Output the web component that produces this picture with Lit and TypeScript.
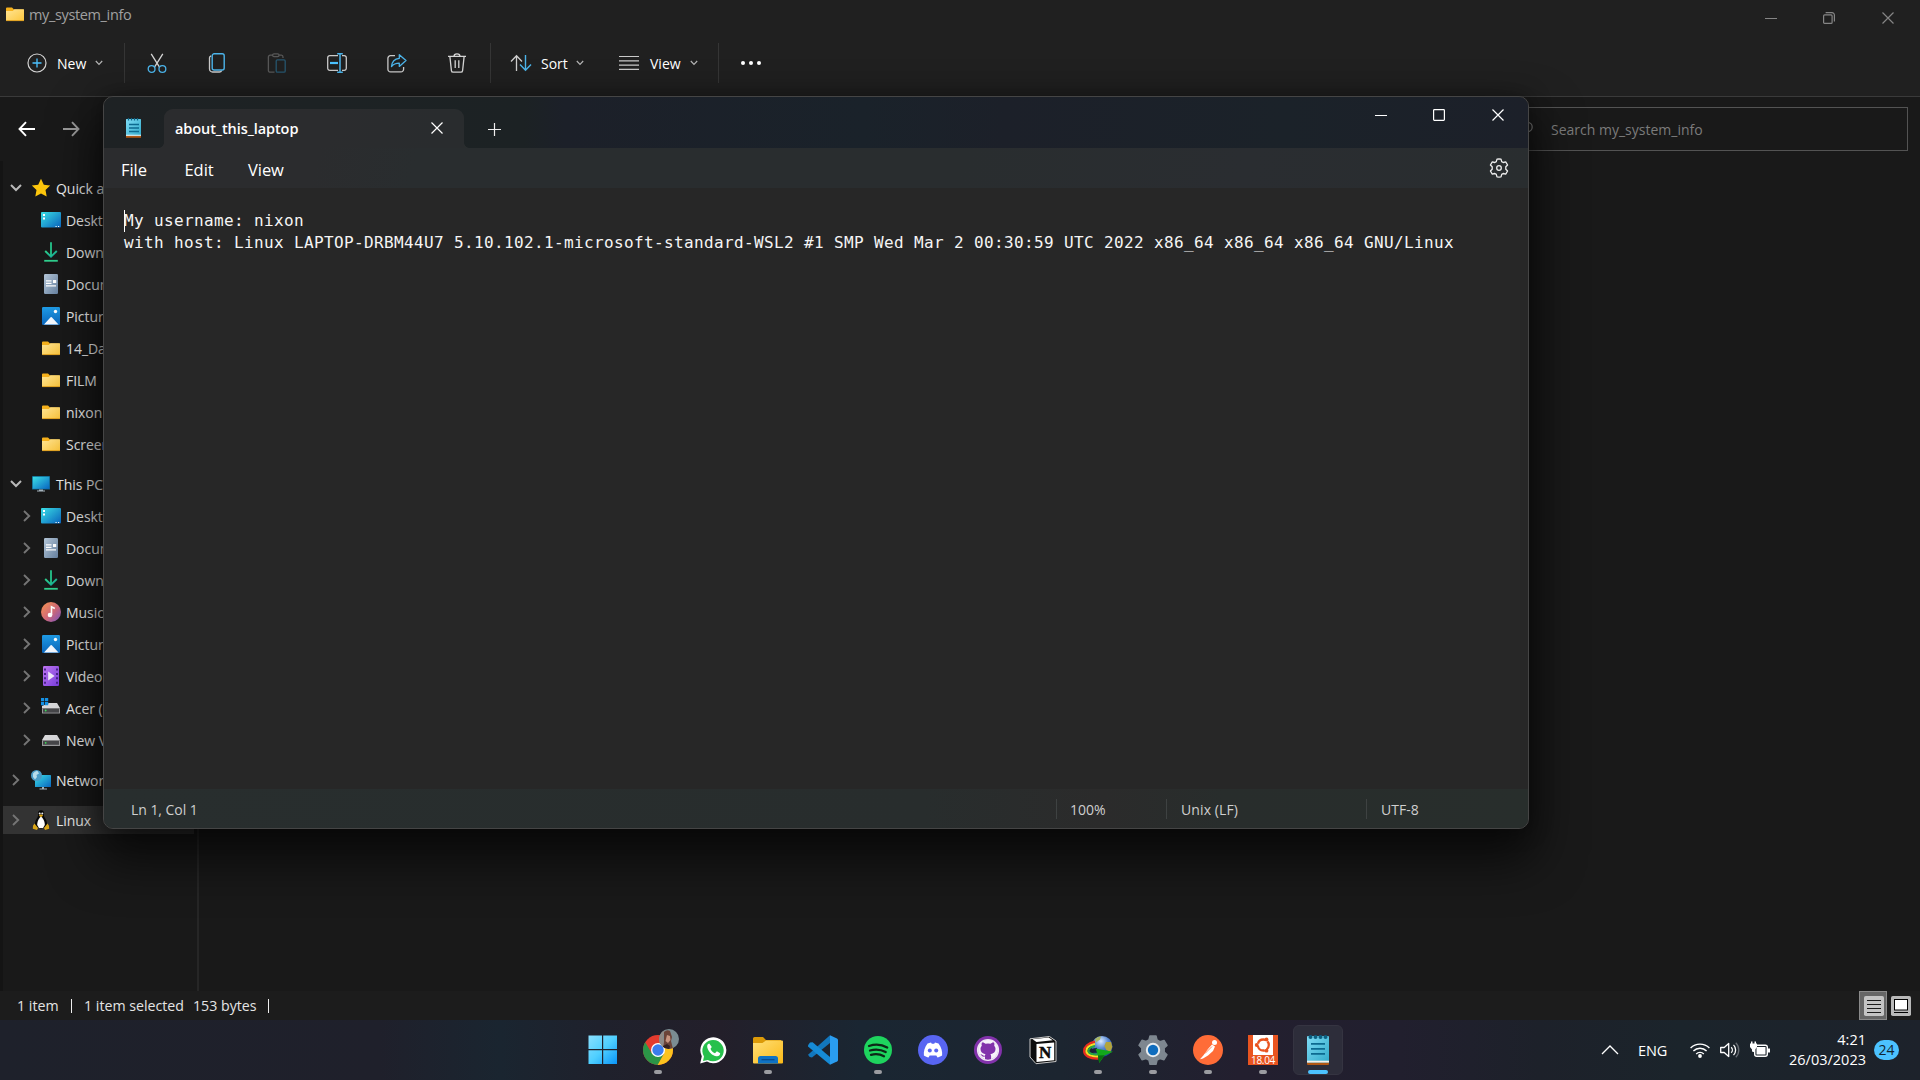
import { LitElement, html, svg, css, TemplateResult, SVGTemplateResult } from "lit";
import { customElement, property } from "lit/decorators.js";

/* ---------- icon drawings ---------- */

const box = (w: number, h: number, body: SVGTemplateResult) =>
  html`<svg width=${w} height=${h} viewBox="0 0 ${w} ${h}" fill="none" style="display:block;overflow:visible">${body}</svg>`;

const gradients = svg`
  <linearGradient id="fold" x1="0" y1="0" x2="1" y2="1"><stop offset="0" stop-color="#ffe595"/><stop offset="1" stop-color="#fcc63c"/></linearGradient>
  <linearGradient id="desk" x1="0" y1="0" x2="1" y2="1"><stop offset="0" stop-color="#3be0e6"/><stop offset="1" stop-color="#0a66c2"/></linearGradient>
  <linearGradient id="dl" x1="0" y1="0" x2="1" y2="1"><stop offset="0" stop-color="#2fd08b"/><stop offset="1" stop-color="#12a89c"/></linearGradient>
  <linearGradient id="doc" x1="0" y1="0" x2="1" y2="1"><stop offset="0" stop-color="#b4c6d8"/><stop offset="1" stop-color="#6883a2"/></linearGradient>
  <linearGradient id="pic" x1="0" y1="0" x2="0" y2="1"><stop offset="0" stop-color="#1f9ce6"/><stop offset="1" stop-color="#0a66bd"/></linearGradient>
  <linearGradient id="mus" x1="0" y1="0" x2="1" y2="1"><stop offset="0" stop-color="#f8954f"/><stop offset=".55" stop-color="#d0697a"/><stop offset="1" stop-color="#7a55c8"/></linearGradient>
  <linearGradient id="vid" x1="0" y1="0" x2="1" y2="1"><stop offset="0" stop-color="#c077f2"/><stop offset="1" stop-color="#7a3ee0"/></linearGradient>
  <linearGradient id="np" x1="0" y1="0" x2="1" y2="1"><stop offset="0" stop-color="#7fdcf5"/><stop offset="1" stop-color="#2fa9c9"/></linearGradient>`;

const g = (w: number, h: number, body: SVGTemplateResult) => box(w, h, svg`<defs>${gradients}</defs>${body}`);

const icons: Record<string, () => TemplateResult> = {
  folder: () => g(20, 20, svg`<path d="M1 4.500a1 1 0 0 1 1-1h5l2 2h9v5H1z" fill="#f6b11c"/><path d="M1 7h6.800l1.600-1.800H19v11a.8.8 0 0 1-.8.8H1.800a.8.8 0 0 1-.8-.8z" fill="url(#fold)"/><path d="M1.300 16.600h17.400" stroke="#e0a021"/>`),
  star: () => g(20, 20, svg`<path d="M10 .8l2.800 6 6.400.8-4.700 4.400 1.200 6.600L10 15.400l-5.700 3.200 1.200-6.600L.8 7.600l6.400-.8z" fill="#fdc60c"/>`),
  desktop: () => g(20, 20, svg`<rect y="2" width="20" height="15.500" rx="1" fill="url(#desk)"/><path d="M2 4h2v2H2zM2 7.500h2v2H2z" fill="#fff"/><path d="M14.500 16.500h1.200M17 16.500h1.200" stroke="#fff"/>`),
  download: () => g(20, 20, svg`<path d="M4.200 9l5.800 5.600L15.800 9" stroke="url(#dl)" stroke-width="1.900"/><path d="M9.100 .3h1.800v13.500H9.100z" fill="#26c98e"/><path d="M3.200 18.800h13.600" stroke="#30cf8e" stroke-width="1.800"/>`),
  document: () => g(20, 20, svg`<rect x="3" y="0" width="14" height="20" rx="1.200" fill="url(#doc)"/><path d="M5 6.800h5.500M5 9.300h5.500M5 11.800h10" stroke="#fff" stroke-width="1.200"/><path d="M12 6h3.200v3H12z" fill="#fff"/>`),
  picture: () => g(20, 20, svg`<rect x="1" y="1" width="18" height="18" rx="1.200" fill="url(#pic)"/><path d="M3 18.500l6.600-7.200a.8.8 0 0 1 1.200 0L17.500 18.500z" fill="#f4f9ff"/><circle cx="14.500" cy="5.500" r="1.700" fill="#fff"/>`),
  music: () => g(20, 20, svg`<circle cx="10" cy="10" r="10" fill="url(#mus)"/><circle cx="9" cy="13" r="2.300" fill="#fff"/><path d="M10.500 13V4.800l3.300 1.700" stroke="#fff" stroke-width="1.600"/>`),
  video: () => g(20, 20, svg`<rect x="2" width="16" height="20" rx="1.200" fill="url(#vid)"/><path d="M4 2.500v16M16 2.500v16" stroke="#3c1a7c" stroke-width="1.700" stroke-dasharray="2 2.400"/><path d="M7.200 5.600l6.400 4.400-6.400 4.400z" fill="#f1e9fb"/>`),
  disk: () => g(20, 20, svg`<path d="M4 5h12l3 5H1z" fill="#d9d9db"/><rect x="1" y="10" width="18" height="6" rx=".5" fill="#9a9a9c"/><rect x="2" y="10.800" width="16" height="4" fill="#47474a"/><circle cx="4.700" cy="12.800" r=".9" fill="#3ee05a"/>`),
  windisk: () => g(20, 20, svg`<path d="M8 5h8l3 5H1V8z" fill="#d9d9db"/><rect x="1" y="10" width="18" height="5.500" rx=".5" fill="#9a9a9c"/><rect x="2" y="10.600" width="16" height="4" fill="#47474a"/><circle cx="4.700" cy="12.500" r=".9" fill="#3ee05a"/><path d="M0 0h3.200v3.200H0zM4 0h3.200v3.200H4zM0 4h3.200v3.200H0zM4 4h3.200v3.200H4z" fill="#1592e6"/>`),
  pc: () => g(20, 20, svg`<rect x="1" y="2" width="18" height="13.500" rx=".6" fill="#13678f"/><rect x="1.800" y="2.800" width="16.400" height="12" fill="url(#desk)"/><path d="M8 15.500h4v1H8zM6 16.500h8v1H6z" fill="#a5b3bd"/>`),
  network: () => g(20, 20, svg`<rect x="4" y="5" width="16" height="12" rx=".6" fill="url(#desk)"/><path d="M11 17h2v2h-2zM8.500 18.600h7.500v1H8.500z" fill="#a5b3bd"/><circle cx="5.500" cy="5.500" r="5.500" fill="#4c9cc6"/><path d="M2 3.500q2-3 4.500-2.500L8 3.500 5.500 5l.5 2-2 2.500L2 7z" fill="#b9dcea"/>`),
  tux: () => g(20, 20, svg`<path d="M10 .3c-2.200 0-3.200 1.500-3 4 .1 2.200-.2 2.800-1.700 5-1 1.600-1.600 4-1.300 7l6 2.200 6-2.200c.3-3-.3-5.400-1.300-7-1.500-2.200-1.800-2.800-1.700-5 .2-2.500-.8-4-3-4z" fill="#080808"/><path d="M10 6.500c-1.600 1-4 5-3.800 8.500L8 18h4l1.800-3c.2-3.500-2.200-7.500-3.800-8.500z" fill="#fff"/><circle cx="8.700" cy="3.600" r="1" fill="#eee"/><circle cx="11.300" cy="3.600" r="1" fill="#eee"/><path d="M7.800 5.400L10 4.300l2.200 1.100L10 7.300z" fill="#e2a914"/><path d="M3.500 13.500l3.500 4.500-1 2-4.200-1.200.2-3zM16.500 13.500L13 18l1 2 4.200-1.200-.2-3z" fill="#d9a516"/>`),
  notepadSmall: () => g(16, 20, svg`<rect y="1" width="15" height="18" rx=".6" fill="url(#np)"/><path d="M0 18h15v1.800H0z" fill="#b25713"/><path d="M0 16.800h15v1H0z" fill="#f3f0ec"/><path d="M2.500 0v2.500M5.500 0v2.500M8.500 0v2.500M11.500 0v2.500" stroke="#0b6386" stroke-width="1.300"/><path d="M3 6.500h10M3 10h10M3 13.500h10" stroke="#0c6a90" stroke-width="1.600"/>`),

  plus: () => box(20, 20, svg`<circle cx="10" cy="10" r="9" stroke="#d4d4d4" stroke-width="1.200"/><path d="M10 5.500v9M5.500 10h9" stroke="#4cc2ff" stroke-width="1.300"/>`),
  cut: () => box(20, 20, svg`<path d="M4.200.8l8.300 13.400M15.800.8L7.500 14.200" stroke="#d4d4d4" stroke-width="1.300"/><circle cx="4.600" cy="16" r="3.400" stroke="#4cb4ea" stroke-width="1.300"/><circle cx="15.400" cy="16" r="3.400" stroke="#4cb4ea" stroke-width="1.300"/>`),
  copy: () => box(20, 20, svg`<path d="M4.200 2.800c-1.200.5-1.700 1-1.700 2v11.200a3 3 0 0 0 3 3H12.500c1 0 1.800-.5 2.300-1.500" stroke="#c9c9c9" stroke-width="1.300"/><rect x="5.200" y=".8" width="12" height="16.200" rx="2" stroke="#4cb4ea" stroke-width="1.400"/>`),
  paste: () => box(20, 20, svg`<path d="M7.500 19.200H3.200A1.800 1.800 0 0 1 1.400 17.400V4a1.800 1.800 0 0 1 1.800-1.800H6M11.500 2.200h2.800A1.800 1.800 0 0 1 16 4v1" stroke="#575757" stroke-width="1.300"/><rect x="5.600" y=".8" width="6.500" height="2.800" rx="1.400" stroke="#575757" stroke-width="1.200"/><rect x="9.200" y="6.800" width="9" height="12.400" rx="1.200" stroke="#27566f" stroke-width="1.300"/>`),
  rename: () => box(20, 20, svg`<path d="M11 2.700H2.800A2 2 0 0 0 .7 4.700v10.600a2 2 0 0 0 2.100 2H11M15 2.700h2.200a2 2 0 0 1 2.100 2v10.600a2 2 0 0 1-2.100 2H15" stroke="#c9c9c9" stroke-width="1.300"/><path d="M3 10h8" stroke="#4cc2ff" stroke-width="2.200"/><path d="M13 .6v18.800M10.200.7h5.600M10.200 19.300h5.600" stroke="#4cb4ea" stroke-width="1.500"/>`),
  share: () => box(20, 20, svg`<path d="M8 2.700H3.500A2.600 2.600 0 0 0 .9 5.300v11A2.600 2.600 0 0 0 3.500 18.900h10.500a2.600 2.600 0 0 0 2.600-2.600V14" stroke="#c9c9c9" stroke-width="1.300"/><path d="M12.300 1.700L19 7.600l-6.700 5.800V10.200c-3.500 0-5.800.8-7.800 3.300.4-4.500 3.300-7.800 7.800-8.200z" stroke="#4cb4ea" stroke-width="1.300" stroke-linejoin="round"/>`),
  trash: () => box(20, 20, svg`<path d="M1 3.400h18M7 3.200a3 2.400 0 0 1 6 0M2.900 3.600l1.500 14a1.800 1.800 0 0 0 1.800 1.600h7.600a1.800 1.800 0 0 0 1.800-1.600l1.500-14M8.200 7.300v7.600M11.800 7.300v7.600" stroke="#d4d4d4" stroke-width="1.300"/>`),
  sort: () => box(22, 18, svg`<path d="M6.500 17V2M1 7.500L6.500 1.800 12 7.500" stroke="#cfcfcf" stroke-width="1.300"/><path d="M15.500 1v15M10 10.500l5.500 5.700 5.500-5.700" stroke="#4cb4ea" stroke-width="1.400"/>`),
  lines: () => box(20, 16, svg`<path d="M0 1.500h20M0 5.800h20M0 10.100h20M0 14.400h20" stroke="#c9c9c9" stroke-width="1.200"/>`),
  chev: () => box(8, 6, svg`<path d="M.8 1L4 4.300 7.200 1" stroke="#b5b5b5" stroke-width="1.200"/>`),
  dots: () => box(22, 6, svg`<circle cx="3" cy="3" r="2" fill="#fff"/><circle cx="11" cy="3" r="2" fill="#fff"/><circle cx="19" cy="3" r="2" fill="#fff"/>`),
  back: () => box(18, 16, svg`<path d="M17 8H2M8 1.200L1.500 8 8 14.800" stroke="#fff" stroke-width="1.900"/>`),
  forward: () => box(18, 16, svg`<path d="M1 8h15M10 1.200L16.500 8 10 14.800" stroke="#9a9a9a" stroke-width="1.900"/>`),
  min: () => box(12, 12, svg`<path d="M0 6.500h12" stroke="currentColor"/>`),
  max: () => box(12, 12, svg`<rect x=".6" y=".6" width="10.800" height="10.800" rx=".8" stroke="currentColor" stroke-width="1.200"/>`),
  restore: () => box(12, 12, svg`<rect x=".6" y="2.900" width="8.500" height="8.500" rx="1" stroke="currentColor" stroke-width="1.200"/><path d="M2.600.6H9A2.400 2.400 0 0 1 11.400 3v6.400" stroke="currentColor" stroke-width="1.200"/>`),
  close: () => box(12, 12, svg`<path d="M.5.500l11 11M11.500.500L.500 11.500" stroke="currentColor" stroke-width="1.200"/>`),
  add: () => box(13, 13, svg`<path d="M6.500 0v13M0 6.500h13" stroke="#eee" stroke-width="1.200"/>`),
  gear: () => box(20, 20, svg`<path d="M10 .8l2 .3.700 2.500 1.500.9 2.500-.7 1.900 3.200-1.800 1.800v2.400l1.800 1.800-1.900 3.200-2.500-.7-1.500.9-.7 2.500-2 .3-2-.3-.7-2.500-1.500-.9-2.500.7L1.400 13l1.800-1.800V8.800L1.400 7l1.900-3.200 2.500.7 1.500-.9L8 1.100z" stroke="#eee" stroke-width="1.300" stroke-linejoin="round"/><circle cx="10" cy="10" r="2.300" stroke="#eee" stroke-width="1.300"/>`),
  down: () => box(12, 8, svg`<path d="M1 1l5 5 5-5" stroke="#b9b9b9" stroke-width="2"/>`),
  right: () => box(8, 12, svg`<path d="M1 1l5.200 5L1 11" stroke="#757575" stroke-width="1.900"/>`),
  glass: () => box(16, 16, svg`<circle cx="10.500" cy="6" r="4.700" stroke="#777" stroke-width="1.300"/><path d="M7 9.500L1 15.500" stroke="#777" stroke-width="1.300"/>`),
  details: () => box(20, 20, svg`<rect width="20" height="20" rx="1.800" fill="#c4c4c4"/><path d="M3 4.500h14M3 8.500h14M3 12.500h14M3 16.500h14" stroke="#1a1a1a"/>`),
  thumbs: () => box(20, 20, svg`<rect width="20" height="20" rx="1.800" fill="#b8b8b8"/><rect x="3.500" y="3.500" width="13" height="10.500" fill="#fff" stroke="#000"/><path d="M3 16.500h14" stroke="#000"/>`),

  start: () => box(30, 30, svg`<defs><linearGradient id="w" x1="0" y1="0" x2="1" y2="1"><stop offset="0" stop-color="#8ae0ff"/><stop offset=".5" stop-color="#4fcfff"/><stop offset="1" stop-color="#0a95f7"/></linearGradient></defs><path d="M.5.5H14v13.500H.5zM15.200.5h13.800v13.500H15.200zM.5 15.200H14V29H.5zM15.200 15.200h13.800V29H15.200z" fill="url(#w)"/>`),
  chrome: () => box(30, 30, svg`<defs><clipPath id="av"><circle cx="26" cy="4" r="10"/></clipPath><clipPath id="cw"><circle cx="15" cy="15" r="15"/></clipPath></defs>
    <g clip-path="url(#cw)"><path d="M0 0h30v30H0z" fill="#e33b2e"/><path d="M15 15L8.900 18.500 1.500 6-2 6v26h16l7.100-13.500z" fill="#2b9547"/><path d="M15 8h17v24H13.500l7.600-13.500z" fill="#fcc31e"/></g>
    <circle cx="15" cy="15" r="7" fill="#fff"/><circle cx="15" cy="15" r="5.700" fill="#3b7ded"/>
    <g clip-path="url(#av)"><path d="M16-6h20v20H16z" fill="#7b8d92"/><path d="M16-6h6l-2 8 2 6-2 6h-4z" fill="#8f8a85"/><path d="M21-3q3-3 6-1l2 6-1 4 2 8H20l1-7z" fill="#6b4438"/><path d="M24 0l3 1 .5 4-2.500 3-2.500-2z" fill="#c8957f"/><path d="M20 11l4-2 3 2-1 4h-7z" fill="#34211f"/></g>`),
  whatsapp: () => box(30, 30, svg`<path d="M2.200 28.500l1.600-7.200A13 13 0 1 1 9 26.600z" fill="#fff"/><path d="M5 26l1-4.600A10.700 10.700 0 1 1 9.800 25z" fill="#27c04c"/><path d="M11.300 8.500c-1.600.3-2.500 2-2 4 1 4.300 5 8.200 9.300 8.800 2 .2 3.500-1 3.600-3l-3.300-2-1.900 1.900c-2.200-.8-3.800-2.500-4.500-4.500l1.300-1.700z" fill="#fff"/>`),
  files: () => box(30, 30, svg`<defs><linearGradient id="f2" x1="0" y1="0" x2="1" y2="1"><stop offset="0" stop-color="#ffdf77"/><stop offset="1" stop-color="#fbb917"/></linearGradient></defs><path d="M0 3.500A1.500 1.500 0 0 1 1.500 2H10l3 3h15v6H0z" fill="#dc9a08"/><path d="M0 8h9.500L13 5.500h16a1 1 0 0 1 1 1v21a1 1 0 0 1-1 1H1a1 1 0 0 1-1-1z" fill="url(#f2)"/><path d="M5 28.500V23.500A2.500 2.500 0 0 1 7.500 21h15A2.500 2.500 0 0 1 25 23.500v5z" fill="#0f72c4"/><path d="M8.500 24.700h13" stroke="#09488b" stroke-width="1.200"/>`),
  vscode: () => box(30, 30, svg`<path d="M22 .3V8L4 22.500l-2.300-.6L0 19.800z" fill="#1277bd"/><path d="M0 10.200L2 7.600l2.600-.3L22 22v7.700L0 11.500z" fill="#168bd6"/><path d="M22 .3L29 3.500q1 .5 1 1.500v20q0 1-1 1.500l-7 3.200z" fill="#2a9df0"/>`),
  spotify: () => box(30, 30, svg`<circle cx="15" cy="15" r="14" fill="#1ed45e"/><path d="M6 11c6-2 13-1.400 18.200 1.500M7 15.500c5.500-1.600 11-1 15.700 1.500M8 19.800c4.500-1.200 9-.8 13 1.400" stroke="#0d2717" stroke-width="2.300" stroke-linecap="round"/>`),
  discord: () => box(30, 30, svg`<circle cx="15" cy="15" r="15" fill="#5865f2"/><path d="M9.500 8.500L13 7.500l.8 1.300h2.400l.8-1.300 3.500 1c3 4 4 8 3.600 12-2 1.300-3.300 1.700-4.600 1.900L18.300 20.600h-6.600L10.500 22.400C9 22.200 7.700 21.600 5.900 20.500c-.4-4 .6-8 3.600-12z" fill="#fff"/><circle cx="11.800" cy="15.600" r="2" fill="#5865f2"/><circle cx="18.200" cy="15.600" r="2" fill="#5865f2"/>`),
  github: () => box(30, 30, svg`<circle cx="15" cy="15" r="14" fill="#8232ab"/><path d="M12 24.300v-2.700c-3 .5-3.500-1.300-4.600-2.300 2-.4 2.200 1.800 4.500 1.400.1-.7.4-1.200.7-1.500-3.300-.5-5.100-2.200-5.100-5.200 0-1.300.5-2.400 1.300-3.200-.4-1.200-.2-2.500.2-3.500 1.300 0 2.500.7 3.500 1.400a11 11 0 0 1 5 0c1-.7 2.200-1.400 3.500-1.400.4 1 .6 2.300.2 3.500.8.8 1.300 1.900 1.300 3.200 0 3-1.800 4.700-5.100 5.200.5.500.7 1.200.7 2v3.100A10 10 0 1 0 12 24.300z" fill="#f7f2fa" fill-rule="evenodd"/><circle cx="15" cy="15" r="10.400" stroke="#f0e8f5" stroke-width="1.400"/>`),
  notion: () => box(30, 30, svg`<path d="M2 3.800L21.500 1.500 28 6v20.500L8 28.700 2 22z" fill="#0c0c0c" stroke="#c9c9c9"/><path d="M8.500 9L26.200 7.400v17.900L8.500 27z" fill="#fff"/><path d="M4.500 4.300l16.200-1.700 4 2.700L8.500 7z" fill="#fff"/><text x="17.200" y="23" text-anchor="middle" font-family="Liberation Serif, serif" font-weight="700" font-size="17" fill="#0c0c0c" stroke="#0c0c0c" stroke-width=".5">N</text>`),
  idm: () => box(30, 30, svg`<defs><radialGradient id="gl" cx=".45" cy=".25" r=".75"><stop offset="0" stop-color="#dcecff"/><stop offset=".45" stop-color="#5b8bd4"/><stop offset="1" stop-color="#1b3b8b"/></radialGradient></defs>
    <circle cx="19" cy="11.500" r="10.500" fill="url(#gl)"/><path d="M23 7l5 0 1.300 5-2 5-4-2-2-4z" fill="#b3a53c"/><path d="M12 4q3-3 6-2.500l-1 3-4 3z" fill="#a9b765"/>
    <path d="M12 6.800C5 8 1.200 12 1.200 16c0 4.500 6 8 14 7.500" stroke="#e92d1e" stroke-width="2.400"/>
    <path d="M12 9c-5.500 1-8.600 4-8.600 7 0 3.200 5 5.800 12 5.300" stroke="#f6df23" stroke-width="2.200"/>
    <path d="M12 11c-4.200.8-6.500 2.800-6.500 5 0 2.300 4 3.800 9.500 3.300" stroke="#25a845" stroke-width="2"/>
    <path d="M8 16c0-1.800 2-2.800 6-3.200v5c-3.500.2-6-.3-6-1.800z" fill="#16233a"/>
    <path d="M12.500 13.500l17.500 3.300-8.500 3.700-5.300 7.500-1.200-7.500z" fill="#12a81b"/><path d="M15 20.500l6.500-.2-5.300 7.200z" fill="#0b6d10"/>`),
  settings: () => box(30, 30, svg`<path d="M12 1h6l1 4 3 1.700 4-1.200 3 5L26.200 13v4l2.800 2.700-3 5-4-1.200L19 25.200l-1 4h-6l-1-4-3-1.700-4 1.200-3-5L3.800 17v-4L1 10.300l3-5 4 1.200L11 4.800z" fill="#7e8790" stroke="#7e8790" stroke-linejoin="round" stroke-width="1.500"/><circle cx="15" cy="15" r="7.200" fill="#e9edf0"/><circle cx="15" cy="15" r="5.200" fill="#0f6cbd"/>`),
  postman: () => box(30, 30, svg`<circle cx="15" cy="15" r="15" fill="#ff6c37"/><circle cx="21.500" cy="7.500" r="2.500" fill="#fff"/><path d="M19 9.500l3 2-2 4.500-5 4.500-5 3-3 .8 3.500-4L15 14z" fill="#fff"/><path d="M12 18.500l7-7" stroke="#ff6c37" stroke-width=".8"/>`),
  ubuntu: () => box(30, 30, svg`<path d="M0 0h30v30H0z" fill="#e95420"/><path d="M5 0h20v20H5z" fill="#fff"/><circle cx="15.300" cy="10" r="5.500" stroke="#e95420" stroke-width="2.300" stroke-dasharray="9.500 2" stroke-dashoffset="4.700"/><circle cx="8.700" cy="10" r="1.900" fill="#e95420"/><circle cx="18.500" cy="4.500" r="1.900" fill="#e95420"/><circle cx="18.500" cy="15.700" r="1.900" fill="#e95420"/><text x="15" y="29" text-anchor="middle" font-family="Open Sans, Noto Sans, sans-serif" font-size="10" letter-spacing="-.3" fill="#fff">18.04</text>`),
  notepad: () => g(24, 32, svg`<rect x="1" y="2" width="22" height="28" rx="1" fill="url(#np)"/><path d="M1 28.500h22V30a1 1 0 0 1-1 1H2a1 1 0 0 1-1-1z" fill="#b25713"/><path d="M1 26.700h22v1.800H1z" fill="#f3f0ec"/><g fill="#0b5e80"><circle cx="4.500" cy="3" r="2"/><circle cx="9.500" cy="3" r="2"/><circle cx="14.500" cy="3" r="2"/><circle cx="19.500" cy="3" r="2"/></g><path d="M5 9.800h14M5 14.800h14M5 19.800h14" stroke="#0c6a90" stroke-width="1.800"/>`),

  caret: () => box(18, 10, svg`<path d="M1 9l8-8 8 8" stroke="#fff" stroke-width="1.300"/>`),
  wifi: () => box(20, 16, svg`<path d="M.6 6a13.300 13.300 0 0 1 18.800 0M3.400 9a9.300 9.300 0 0 1 13.200 0M6.200 11.900a5.400 5.400 0 0 1 7.600 0" stroke="#fff" stroke-width="1.400"/><circle cx="10" cy="14" r="1.900" fill="#fff"/>`),
  sound: () => box(20, 16, svg`<path d="M.7 5.500h3.500L8.700 1.500v13L4.200 10.500H.7z" stroke="#fff" stroke-width="1.300" stroke-linejoin="round"/><path d="M11.200 5.200a4 4 0 0 1 0 5.600M13.500 2.900a7.200 7.200 0 0 1 0 10.200" stroke="#fff" stroke-width="1.300"/><path d="M15.800 .8a10.200 10.200 0 0 1 0 14.400" stroke="#666b72" stroke-width="1.300"/>`),
  battery: () => box(20, 16, svg`<rect x="4.700" y="3.200" width="12.600" height="11" rx="2" stroke="#fff" stroke-width="1.400"/><path d="M6.500 5h9v7.500h-9zM18 6.500h2v4h-2z" fill="#fff"/><path d="M0 1.500h1V-.5h1.500v2h2V-.5H6v2h1V5L5 7.500v3l-3-1v-2L0 5z" fill="#fff"/>`),
};

/* ---------- Explorer: command bar ---------- */

@customElement("explorer-header")
class ExplorerHeader extends LitElement {
  static styles = css`
    :host { display: flex; flex-direction: column; height: 96px; border-bottom: 1px solid #3a3a3a; background: #202020; }
    .title { display: flex; height: 30px; align-items: center; color: #a0a0a0; }
    .folder { margin: -2px 4px 0 5px; }
    .name { flex: 1; font-size: 14.500px; letter-spacing: -0.360px; margin-top: -2px; }
    .win { display: flex; gap: 46.500px; padding: 5px 26px 0 0; color: #858585; }
    .win svg:nth-child(2) { margin: 0 0.500px 0 -0.500px; }
    .bar { display: flex; align-items: center; height: 66px; font-size: 14px; color: #fff; font-weight: 500; }
    .sep { width: 1px; height: 40px; background: #353535; flex: none; }
    .new, .tools, .sort, .view { flex: none; }
    .new { display: flex; align-items: center; width: 97.500px; padding-left: 26.500px; }
    .new .t { width: 38px; margin-left: 10.500px; }
    .tools { display: flex; gap: 40.100px; width: 343px; padding-left: 22px; }
    .drop { display: flex; align-items: center; }
    .sort { width: 109px; padding-left: 19px; }
    .sort .t { width: 35px; margin-left: 9px; }
    .view { width: 99px; }
    .view .t { width: 40px; margin-left: 11px; }
    .more { margin-left: 20.500px; }
  `;
  render() {
    const tools = ["cut", "copy", "paste", "rename", "share", "trash"];
    return html`
      <div class="title">
        <div class="folder">${icons.folder()}</div>
        <div class="name">my_system_info</div>
        <div class="win">${icons.min()}${icons.restore()}${icons.close()}</div>
      </div>
      <div class="bar">
        <div class="new">${icons.plus()}<span class="t">New</span>${icons.chev()}</div>
        <div class="sep"></div>
        <div class="tools">${tools.map((t) => icons[t]())}</div>
        <div class="sep"></div>
        <div class="drop sort">${icons.sort()}<span class="t">Sort</span>${icons.chev()}</div>
        <div class="drop view">${icons.lines()}<span class="t">View</span>${icons.chev()}</div>
        <div class="sep"></div>
        <div class="more">${icons.dots()}</div>
      </div>`;
  }
}

/* ---------- Explorer: navigation tree ---------- */

type Row = { level: number; icon: string; label: string; state?: "open" | "shut"; gap?: boolean; selected?: boolean };

const rows: Row[] = [
  { level: 0, icon: "star", label: "Quick access", state: "open" },
  { level: 1, icon: "desktop", label: "Desktop" },
  { level: 1, icon: "download", label: "Downloads" },
  { level: 1, icon: "document", label: "Documents" },
  { level: 1, icon: "picture", label: "Pictures" },
  { level: 1, icon: "folder", label: "14_Data" },
  { level: 1, icon: "folder", label: "FILM" },
  { level: 1, icon: "folder", label: "nixon" },
  { level: 1, icon: "folder", label: "Screenshots" },
  { level: 0, icon: "pc", label: "This PC", state: "open", gap: true },
  { level: 1, icon: "desktop", label: "Desktop", state: "shut" },
  { level: 1, icon: "document", label: "Documents", state: "shut" },
  { level: 1, icon: "download", label: "Downloads", state: "shut" },
  { level: 1, icon: "music", label: "Music", state: "shut" },
  { level: 1, icon: "picture", label: "Pictures", state: "shut" },
  { level: 1, icon: "video", label: "Videos", state: "shut" },
  { level: 1, icon: "windisk", label: "Acer (C:)", state: "shut" },
  { level: 1, icon: "disk", label: "New Volume (D:)", state: "shut" },
  { level: 0, icon: "network", label: "Network", state: "shut", gap: true },
  { level: 0, icon: "tux", label: "Linux", state: "shut", gap: true, selected: true },
];

@customElement("nav-tree")
class NavTree extends LitElement {
  static styles = css`
    :host { display: block; box-sizing: border-box; width: 199px; padding: 13px 3px 0 3px; border-right: 2px solid #262626; }
    .row { display: flex; align-items: center; box-sizing: border-box; height: 28px; margin-bottom: 4px; font-size: 14px; letter-spacing: -0.05px; color: #eee; white-space: nowrap; overflow: hidden; }
    .gap { margin-top: 12px; }
    .selected { background: #333; }
    .twist { display: flex; justify-content: center; width: 25px; flex: none; }
    .icon { margin: 0 5px 0 3px; }
    .label { padding-top: 1px; }
    .l1 .twist { justify-content: flex-start; padding-left: 19.500px; width: 13.500px; }
    .l1 .icon { margin: 0 5px 0 5px; }
  `;
  render() {
    return rows.map(
      (r) => html`<div class="row l${r.level} ${r.gap ? "gap" : ""} ${r.selected ? "selected" : ""}">
        <div class="twist">${r.state === "open" ? icons.down() : r.state === "shut" ? icons.right() : ""}</div>
        <div class="icon">${icons[r.icon]()}</div>
        <div class="label">${r.label}</div>
      </div>`
    );
  }
}

/* ---------- Notepad window ---------- */

@customElement("notepad-window")
class NotepadWindow extends LitElement {
  @property({ attribute: false }) lines = [
    "My username: nixon",
    "with host: Linux LAPTOP-DRBM44U7 5.10.102.1-microsoft-standard-WSL2 #1 SMP Wed Mar 2 00:30:59 UTC 2022 x86_64 x86_64 x86_64 GNU/Linux",
  ];
  static styles = css`
    :host { display: flex; flex-direction: column; box-sizing: border-box; border: 1px solid #454545; border-radius: 10px; overflow: hidden; background: #272727;
      box-shadow: 0 26px 48px 6px rgba(0,0,0,.62), 0 0 22px rgba(0,0,0,.35); }
    .title { display: flex; height: 51px; background: linear-gradient(90deg, #1e2224 0, #1c2224 420px, #1c2029 460px, #1a222a 760px, #1c2029 900px, #1b2229 1180px, #1c2029); }
    .app { padding: 21px 0 0 22px; width: 38px; }
    .tab { position: relative; display: flex; align-items: center; box-sizing: border-box; width: 300px; height: 39px; margin-top: 12px; padding: 0 21px 0 11px; border-radius: 9px 9px 0 0; background: linear-gradient(100deg, #2b2c2e 55%, #292c2e 90%); color: #fff; font-size: 14.500px; }
    .tab::before, .tab::after { content: ""; position: absolute; bottom: 0; width: 5px; height: 5px; }
    .tab::before { left: -5px; background: radial-gradient(circle at 0 0, transparent 4.500px, #2b2c2e 5px); }
    .tab::after { right: -5px; background: radial-gradient(circle at 100% 0, transparent 4.500px, #292d2e 5px); }
    .name { flex: 1; font-weight: 600; letter-spacing: -0.080px; }
    .add { margin: 26px 0 0 24px; flex: 1; }
    .win { display: flex; gap: 46.500px; padding: 12px 24px 0 0; color: #fff; }
    .win svg:nth-child(2) { margin: 0 0.500px 0 -0.500px; }
    .tab svg { margin-top: -2px; }
    .menu { display: flex; align-items: center; height: 40px; padding: 0 19px 0 17px; background: linear-gradient(105deg, #2b2c2e 15%, #292d2f 22%, #292d2f 60%, #2a2d31 80%, #292d2f); color: #fff; font-size: 16.500px; }
    .menu span { width: 63.500px; letter-spacing: -0.05px; padding-top: 2px; }
    .menu .last { flex: 1; }
    .edit { flex: 1; padding: 22px 20px; color: #f5f5f5; font: 16px/22px "DejaVu Sans Mono", "Liberation Mono", monospace; letter-spacing: 0.368px; white-space: pre; }
    .line { display: flex; height: 22px; }
    .caret { width: 1px; height: 22px; margin-right: -1px; background: #fff; }
    .status { display: flex; align-items: center; height: 39px; padding-left: 27px; color: #cfcfcf; font-size: 14px; background: linear-gradient(90deg, #282e2e 0, #282d2d 820px, #2b2b2b 1000px, #282d2c 1120px, #282e2c); }
    .status .pos { flex: 1; padding-top: 1px; letter-spacing: -0.050px; }
    .cell { display: flex; align-items: center; box-sizing: border-box; height: 20px; border-left: 1px solid #3e4242; padding: 1px 0 0 14px; }
    .zoom { width: 110px; padding-left: 13px; }
    .eol { width: 200px; letter-spacing: 0.1px; }
    .enc { width: 162px; }
  `;
  render() {
    return html`
      <div class="title">
        <div class="app">${icons.notepadSmall()}</div>
        <div class="tab"><span class="name">about_this_laptop</span>${icons.close()}</div>
        <div class="add">${icons.add()}</div>
        <div class="win">${icons.min()}${icons.max()}${icons.close()}</div>
      </div>
      <div class="menu"><span>File</span><span>Edit</span><span class="last">View</span>${icons.gear()}</div>
      <div class="edit">${this.lines.map((l, i) => html`<div class="line">${i === 0 ? html`<i class="caret"></i>` : ""}${l}</div>`)}</div>
      <div class="status">
        <span class="pos">Ln 1, Col 1</span>
        <span class="cell zoom">100%</span>
        <span class="cell eol">Unix (LF)</span>
        <span class="cell enc">UTF-8</span>
      </div>`;
  }
}

/* ---------- Taskbar ---------- */

const apps: [string, "" | "run" | "active"][] = [
  ["start", ""], ["chrome", "run"], ["whatsapp", ""], ["files", "run"], ["vscode", ""], ["spotify", "run"], ["discord", ""],
  ["github", ""], ["notion", ""], ["idm", "run"], ["settings", "run"], ["postman", "run"], ["ubuntu", "run"], ["notepad", "active"],
];

@customElement("task-bar")
class TaskBar extends LitElement {
  static styles = css`
    :host { display: flex; height: 60px; color: #fff; font-size: 14px;
      background: linear-gradient(90deg, #1e212b 0, #1f202b 380px, #1a2530 500px, #1f212c 600px, #231f2a 720px, #1a2632 860px, #1c2530 1060px, #231f2f 1240px, #211f2e 1400px, #1d212a 1540px, #1b242b 1680px, #1d222b 1920px); }
    .apps { display: flex; padding-left: 575.500px; width: 770.500px; }
    .app { display: flex; flex-direction: column; align-items: center; box-sizing: border-box; width: 50px; height: 50px; margin: 5px 2.500px; border-radius: 6px; }
    .active { background: #2d2d3a; border: 1px solid #353441; }
    .pic { display: flex; align-items: center; justify-content: center; height: 45px; width: 50px; margin-top: 2px; margin-bottom: -2px; }
    .active .pic { margin-top: 1px; }
    .run::after { content: ""; width: 8px; height: 4px; border-radius: 2px; background: #9b9ca1; }
    .active::after { content: ""; width: 20px; height: 4px; border-radius: 2px; background: #4cc2ff; flex: none; }
    .tray { display: flex; flex: 1; align-items: center; padding: 0 21px 0 0; justify-content: flex-end; }
    .lang { width: 52px; margin-left: 19px; font-size: 14.500px; letter-spacing: -0.1px; }
    .sys { display: flex; gap: 10px; }
    .clock { width: 96px; text-align: right; line-height: 20px; font-size: 14.500px; margin-top: -1px; }
    .badge { width: 25px; height: 20px; margin-left: 8px; border-radius: 10px; background: #4cc2ff; color: #10242f; text-align: center; line-height: 20px; font-size: 14px; }
  `;
  render() {
    return html`
      <div class="apps">${apps.map(([n, s]) => html`<div class="app ${s}"><div class="pic">${icons[n]()}</div></div>`)}</div>
      <div class="tray">
        ${icons.caret()}<span class="lang">ENG</span>
        <div class="sys">${icons.wifi()}${icons.sound()}${icons.battery()}</div>
        <div class="clock"><div>4:21</div><div>26/03/2023</div></div>
        <div class="badge">24</div>
      </div>`;
  }
}

/* ---------- Desktop ---------- */

@customElement("app-root")
class AppRoot extends LitElement {
  static styles = css`
    :host { position: relative; display: flex; flex-direction: column; width: 1920px; height: 1080px; overflow: hidden; background: #191919; font-family: "Open Sans", "Noto Sans", sans-serif; }
    .nav { display: flex; align-items: center; justify-content: space-between; box-sizing: border-box; height: 64px; padding: 0 12px 0 18px; }
    .arrows { display: flex; gap: 26px; }
    .search { display: flex; align-items: center; box-sizing: border-box; width: 408px; height: 44px; padding-left: 16px; border: 1px solid #535353; color: #7b7b7b; font-size: 14px; }
    .search span { margin-left: 18px; }
    .body { display: flex; flex: 1; min-height: 0; }
    .edge { width: 3px; background: #141414; margin-right: -3px; }
    .status { display: flex; align-items: center; height: 29px; padding: 0 9px 0 17px; background: #1c1c1c; color: #e4e4e4; font-size: 14.200px; }
    .bar { width: 1px; height: 14px; background: #eee; }
    .count { width: 54px; }
    .picked { width: 109px; margin-left: 12px; }
    .size { width: 75px; }
    .grow { flex: 1; }
    .mode { display: flex; align-items: center; justify-content: center; box-sizing: border-box; width: 28px; height: 29px; margin-right: 4px; border: 1px solid #8a8a8a; background: #666; }
    .mode svg { margin-left: 1px; }
    notepad-window { position: absolute; left: 103px; top: 96px; width: 1426px; height: 733px; }
  `;
  render() {
    return html`
      <explorer-header></explorer-header>
      <div class="nav">
        <div class="arrows">${icons.back()}${icons.forward()}</div>
        <div class="search">${icons.glass()}<span>Search my_system_info</span></div>
      </div>
      <div class="body"><div class="edge"></div><nav-tree></nav-tree></div>
      <div class="status">
        <span class="count">1 item</span><i class="bar"></i>
        <span class="picked">1 item selected</span>
        <span class="size">153 bytes</span><i class="bar"></i>
        <span class="grow"></span>
        <div class="mode">${icons.details()}</div>${icons.thumbs()}
      </div>
      <task-bar></task-bar>
      <notepad-window></notepad-window>`;
  }
}
